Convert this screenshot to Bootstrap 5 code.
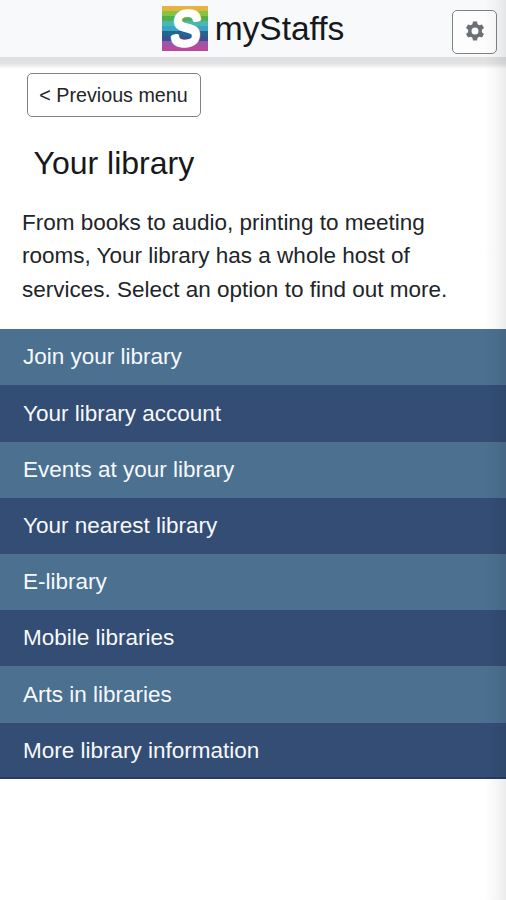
<!DOCTYPE html>
<html lang="en">
<head>
<meta charset="utf-8">
<meta name="viewport" content="width=device-width, initial-scale=1">
<title>myStaffs - Your library</title>
<link href="https://cdn.jsdelivr.net/npm/bootstrap@5.3.0/dist/css/bootstrap.min.css" rel="stylesheet">
<style>
body{font-family:"Liberation Sans",Arial,sans-serif;font-size:22.5px;line-height:33.75px;color:#212529;background:#fff;min-height:900px;overflow-x:hidden}
.topbar{display:grid;grid-template-columns:1fr auto 1fr;height:57px;background:#f8f9fb}
.topbar-shade{height:12px;background:linear-gradient(#dedede,#e3e3e3 55%,#fff)}
.brand{font-size:33.5px;line-height:45px;color:#16181b;gap:7px;padding-top:6px}
.brand svg{overflow:visible}
.settings{width:45px;height:44px;margin:10px 9px 0 0;padding:0 0 2px;border:1.5px solid #7d8287;border-radius:5px;background:#fdfdfe}
.back{width:174px;height:44px;margin:4px 0 0 26.5px;padding:1px 0 0;border:1.4px solid #7d8287;border-radius:5px;font-size:19.7px;line-height:1;color:#212529;background:#fff}
.page-title{font-size:32px;line-height:38px;margin:27px 0 0 33.5px;color:#16181b}
.intro{margin:23.5px 40px 0 22px}
.menu{margin-top:22.5px;border-bottom:2px solid #243c66}
.menu a{height:56.2px;padding-left:23px;color:#f6f9fc;background:#4b7090}
.menu a:nth-child(even){background:#334d74}
.menu a:last-child{height:54.4px;padding-top:2px}
.edge{width:22px;background:linear-gradient(90deg,rgba(0,0,0,0),rgba(0,0,0,.025) 45%,rgba(0,0,0,.075))}
</style>
</head>
<body class="position-relative">
<header class="topbar">
  <span></span>
  <a class="brand d-flex align-items-start text-decoration-none" href="#">
    <svg width="46" height="45" viewBox="0 0 46 45" aria-hidden="true">
      <rect width="46" height="45" fill="#b8499c"/>
      <rect width="46" height="40" fill="#9a56a8"/>
      <rect width="46" height="35" fill="#3d4f8e"/>
      <rect width="46" height="30" fill="#23658f"/>
      <rect width="46" height="25" fill="#3ba3c4"/>
      <rect width="46" height="20" fill="#49b8b0"/>
      <rect width="46" height="15" fill="#54ae4b"/>
      <rect width="46" height="10" fill="#84c440"/>
      <rect width="46" height="5" fill="#e6b33e"/>
      <text text-anchor="middle" font-family="Liberation Sans, Arial, sans-serif" font-size="48" fill="#fff" stroke="#fff" stroke-width="4.500" stroke-linejoin="round" transform="translate(22.300 39.200) skewX(-6) scale(.9 1)">S</text>
    </svg>
    <span>myStaffs</span>
  </a>
  <button class="settings btn d-flex align-items-center justify-content-center ms-auto" aria-label="Settings">
    <svg width="20" height="20" viewBox="0 0 20 20" aria-hidden="true">
      <path fill="#6a7076" fill-rule="evenodd" d="M8 .5h4l.6 2.800 1.700 1 2.700-.9 2 3.500-2.100 1.900v2.400l2.100 1.900-2 3.500-2.700-.9-1.700 1-.6 2.800H8l-.6-2.800-1.700-1-2.700.9-2-3.500 2.100-1.900V8.800L1 6.900l2-3.500 2.700.9 1.700-1zM10 6.500a3.500 3.500 0 1 0 0 7 3.500 3.500 0 0 0 0-7z"/>
    </svg>
  </button>
</header>
<div class="topbar-shade"></div>
<main>
  <a class="back btn d-flex align-items-center justify-content-center" href="#">&lt; Previous menu</a>
  <h1 class="page-title fw-normal">Your library</h1>
  <p class="intro">From books to audio, printing to meeting rooms, Your library has a whole host of services. Select an option to find out more.</p>
  <nav class="menu d-flex flex-column">
    <a class="d-flex align-items-center text-decoration-none" href="#">Join your library</a>
    <a class="d-flex align-items-center text-decoration-none" href="#">Your library account</a>
    <a class="d-flex align-items-center text-decoration-none" href="#">Events at your library</a>
    <a class="d-flex align-items-center text-decoration-none" href="#">Your nearest library</a>
    <a class="d-flex align-items-center text-decoration-none" href="#">E-library</a>
    <a class="d-flex align-items-center text-decoration-none" href="#">Mobile libraries</a>
    <a class="d-flex align-items-center text-decoration-none" href="#">Arts in libraries</a>
    <a class="d-flex align-items-center text-decoration-none" href="#">More library information</a>
  </nav>
</main>
<div class="edge position-absolute top-0 end-0 bottom-0 pe-none"></div>
<script src="https://cdn.jsdelivr.net/npm/bootstrap@5.3.0/dist/js/bootstrap.bundle.min.js"></script>
</body>
</html>
